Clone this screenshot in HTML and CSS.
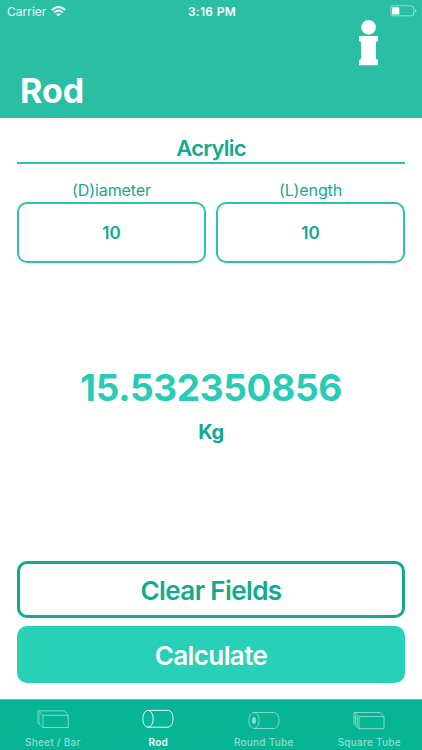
FILE: index.html
```
<!DOCTYPE html>
<html lang="en">

<head>
    <meta charset="UTF-8">
    <meta name="viewport" content="width=device-width, initial-scale=1.0">
    <title>Rod</title>
    <link rel="stylesheet" href="styles.css">
</head>

<body>
    <!-- Header -->
    <header class="header">
        <div class="status-bar">
            <div class="carrier">
                <span>Carrier</span>
                <svg class="wifi" width="15" height="11" viewBox="0 0 15 11">
                    <path d="M0.8 4 Q7.5 -2 14.2 4" fill="none" stroke="#fff" stroke-width="2" />
                    <path d="M3.2 6.5 Q7.5 2.7 11.8 6.5" fill="none" stroke="#fff" stroke-width="1.9" />
                    <path d="M5.1 8.2 Q7.5 6.2 9.9 8.2 L7.5 10.6 Z" fill="#fff" />
                </svg>
            </div>
            <span class="time">3:16 PM</span>
            <svg class="battery" width="27" height="12" viewBox="0 0 27 12">
                <rect x="0.8" y="0.8" width="23" height="10" rx="2.4" fill="none" stroke="#fff" stroke-opacity="0.5" />
                <rect x="2" y="2.2" width="7.3" height="7.2" rx="1" fill="#fff" />
                <path d="M25 4 Q26.6 4.4 26.6 5.8 Q26.6 7.2 25 7.6 Z" fill="#fff" fill-opacity="0.5" />
            </svg>
        </div>
        <div class="info">
            <svg width="20" height="46" viewBox="0 0 20 46">
                <circle cx="10.6" cy="7.4" r="7.3" fill="#fff" />
                <path d="M1 16 H20 V21 Q18 21 18 23 V38 Q18 40 20 40 V45.3 H1 V40 Q3 40 3 38 V23 Q3 21 1 21 Z" fill="#fff" />
            </svg>
        </div>
        <h1 class="title">Rod</h1>
    </header>

    <!-- Form -->
    <main class="content">
        <div class="material">Acrylic</div>

        <div class="fields">
            <div class="field">
                <label>(D)iameter</label>
                <div class="field-box">10</div>
            </div>
            <div class="field">
                <label>(L)ength</label>
                <div class="field-box">10</div>
            </div>
        </div>

        <div class="result">
            <div class="result-value">15.532350856</div>
            <div class="result-unit">Kg</div>
        </div>

        <div class="buttons">
            <button class="btn btn-clear">Clear Fields</button>
            <button class="btn btn-calculate">Calculate</button>
        </div>
    </main>

    <!-- Tabs -->
    <nav class="tabs">
        <div class="tab">
            <svg width="32" height="20" viewBox="0 0 32 20">
                <path d="M1 1.9 H27.5 L31.3 6.3 V18.5 H6 L1 14 Z M1 1.9 L6 6.3 H31.3 M6 6.3 V18.5" />
                <path d="M2.6 3.6 V15" opacity="0.5" />
            </svg>
            <span>Sheet / Bar</span>
        </div>
        <div class="tab active">
            <svg width="32" height="20" viewBox="0 0 32 20">
                <ellipse cx="6" cy="9.8" rx="5.2" ry="8.4" />
                <path d="M6 1.4 H26.5 C32.5 2.1 32.5 17.5 26.5 18.2 H6" />
            </svg>
            <span>Rod</span>
        </div>
        <div class="tab tab-low">
            <svg width="32" height="20" viewBox="0 0 32 20">
                <ellipse cx="6" cy="9.5" rx="5.2" ry="8" />
                <ellipse cx="6" cy="9.5" rx="1.7" ry="3" class="solid" />
                <path d="M6 1.5 H26.5 C32.5 2.2 32.5 16.8 26.5 17.5 H6" />
            </svg>
            <span>Round Tube</span>
        </div>
        <div class="tab tab-low">
            <svg width="32" height="20" viewBox="0 0 32 20">
                <path d="M1 1.5 H27 L31 5.6 V17.7 H6 L1 13.2 Z M1 1.5 L6 5.6 H31 M6 5.6 V17.7" />
                <path d="M2.4 4.8 L4.3 6.4 V14 L2.4 12.4 Z" />
            </svg>
            <span>Square Tube</span>
        </div>
    </nav>
</body>

</html>
```
FILE: styles.css
```
* {
    box-sizing: border-box;
}

body {
    margin: 0;
    height: 750px;
    display: flex;
    flex-direction: column;
    background-color: #fff;
    color: #10ab8f;
    font-family: Inter, "Liberation Sans", sans-serif;
    overflow: hidden;
}

/* Header */
.header {
    height: 118px;
    flex: none;
    background-color: #2abfa4;
    color: #fff;
}

.status-bar {
    height: 20px;
    padding: 2px 5px 0 7px;
    display: grid;
    grid-template-columns: 1fr auto 1fr;
    align-items: center;
    font-size: 12px;
}

.carrier {
    display: flex;
    align-items: center;
    gap: 5px;
    opacity: 0.92;
}

.time {
    font-weight: 600;
    letter-spacing: 0.3px;
}

.battery {
    justify-self: end;
}

.info {
    height: 46px;
    padding-right: 44px;
    display: flex;
    justify-content: flex-end;
}

.title {
    margin: 3px 0 0 20px;
    font-size: 34px;
    line-height: 43px;
    font-weight: 700;
}

/* Form */
.content {
    flex: 1;
    padding: 15px 17px 16px 17px;
    display: flex;
    flex-direction: column;
}

.material {
    height: 31px;
    border-bottom: 2px solid #28c4ab;
    font-size: 22px;
    line-height: 31px;
    font-weight: 600;
    letter-spacing: -0.8px;
    text-align: center;
}

.fields {
    display: flex;
    gap: 10px;
    margin-top: 15px;
}

.field {
    flex: 1;
    text-align: center;
}

.field label {
    display: block;
    height: 23px;
    font-size: 16px;
    line-height: 22px;
    letter-spacing: -0.1px;
}

.field-box {
    height: 61px;
    border: 2px solid #28c4ab;
    border-radius: 10px;
    font-size: 17px;
    line-height: 58px;
    font-weight: 600;
}

.result {
    margin-top: 102px;
    text-align: center;
}

.result-value {
    color: #2acbb4;
    font-size: 37px;
    line-height: 46px;
    font-weight: 700;
    letter-spacing: -0.35px;
}

.result-unit {
    margin-top: 9px;
    font-size: 20px;
    line-height: 24px;
    font-weight: 700;
    letter-spacing: -0.4px;
}

.buttons {
    display: flex;
    flex-direction: column;
    gap: 8px;
    margin-top: auto;
}

.btn {
    height: 57px;
    padding: 1px 0 0;
    border: none;
    border-radius: 10px;
    font-family: inherit;
    font-size: 26px;
    font-weight: 600;
    letter-spacing: -0.6px;
}

.btn-clear {
    border: 3px solid #10ab8f;
    background-color: #fff;
    color: #10ab8f;
}

.btn-calculate {
    background-color: #28d0b8;
    color: #fff;
}

/* Tabs */
.tabs {
    height: 51px;
    flex: none;
    display: flex;
    background-color: #06b596;
    border-top: 1px solid #54cdb7;
}

.tab {
    flex: 1;
    padding-top: 9px;
    display: flex;
    flex-direction: column;
    align-items: center;
    color: #8eddcd;
    font-size: 10px;
    line-height: 12px;
    font-weight: 500;
    letter-spacing: 0.25px;
}

.tab svg {
    fill: none;
    stroke: currentColor;
    stroke-width: 0.9;
    margin-bottom: 7px;
}

.tab svg .solid {
    fill: currentColor;
}

.tab.active {
    color: #fff;
    font-weight: 600;
}

.tab-low {
    padding-top: 11px;
}

.tab-low svg {
    margin-bottom: 5px;
}
```
